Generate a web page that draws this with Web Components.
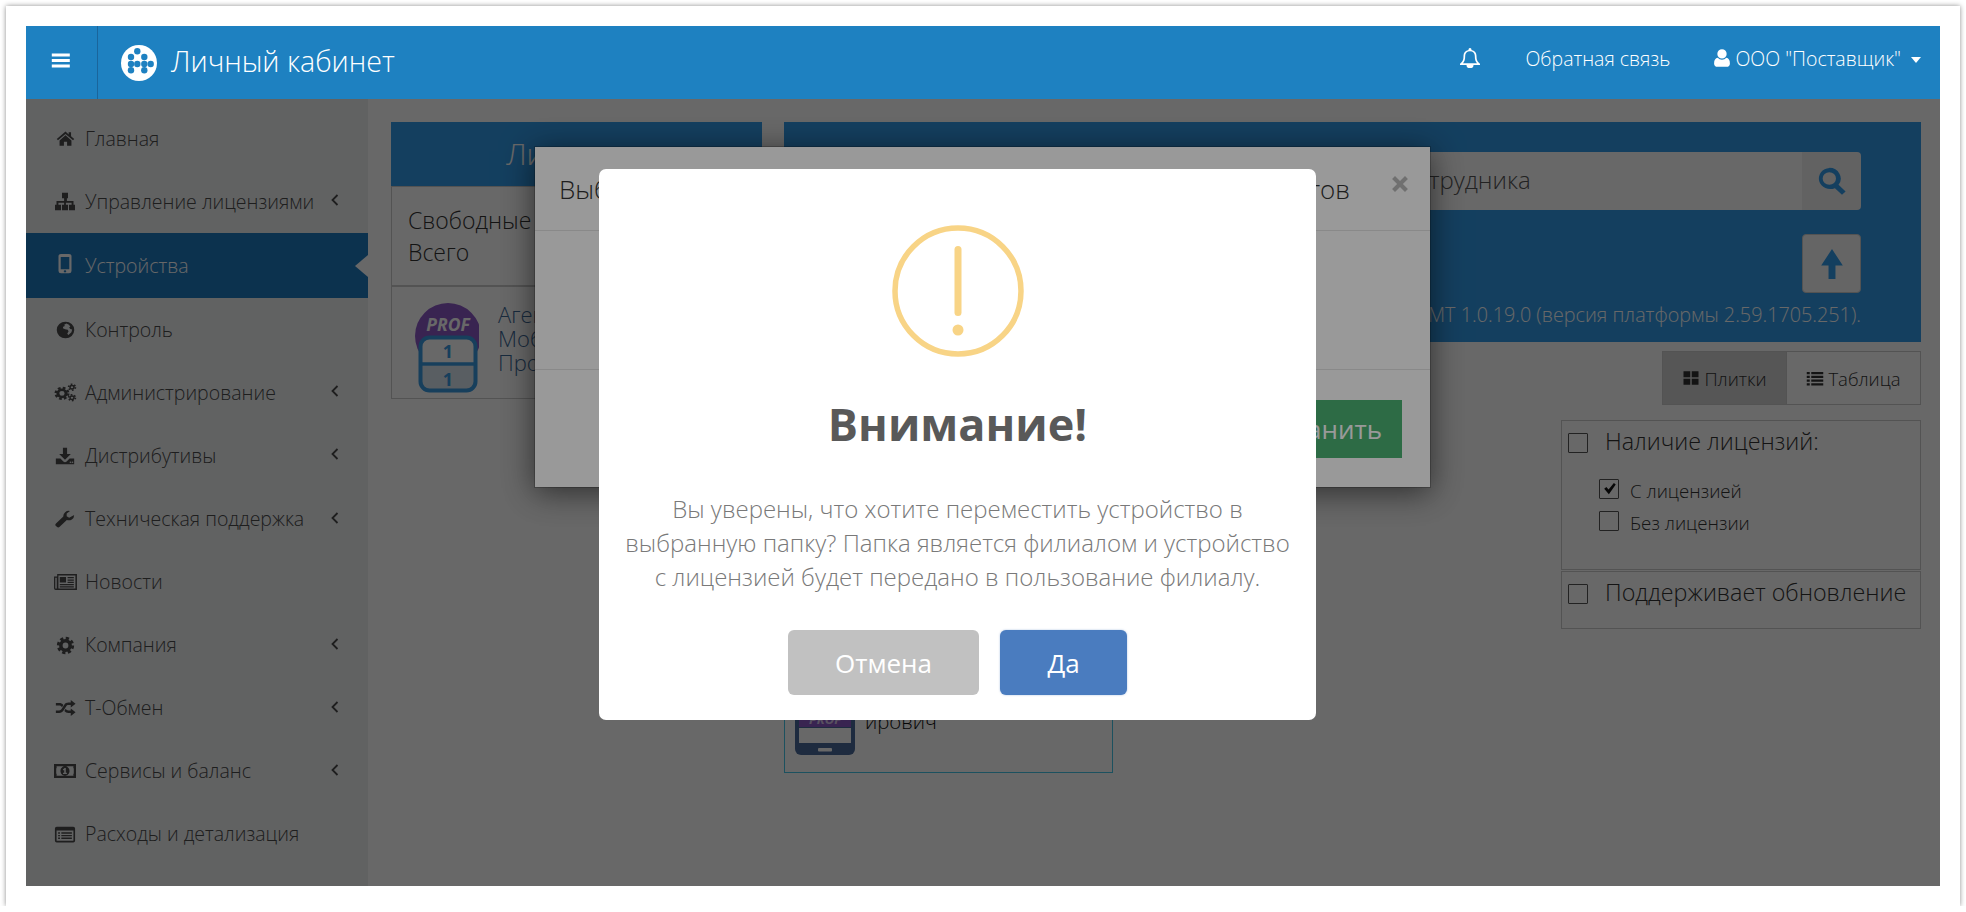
<!DOCTYPE html>
<html lang="ru">
<head>
<meta charset="utf-8">
<title>Личный кабинет</title>
<style>
    html, body { margin: 0; padding: 0; background: #fff; }
    body { font-family: "Open Sans", "Noto Sans", sans-serif; color: #333; }
</style>
</head>
<body>
<lk-frame>
    <lk-header></lk-header>
    <lk-main>
        <lk-sidebar slot="side">
            <lk-nav icon="home">Главная</lk-nav>
            <lk-nav icon="sitemap" arrow>Управление лицензиями</lk-nav>
            <lk-nav icon="mobile" active>Устройства</lk-nav>
            <lk-nav icon="globe">Контроль</lk-nav>
            <lk-nav icon="cogs" arrow>Администрирование</lk-nav>
            <lk-nav icon="download" arrow>Дистрибутивы</lk-nav>
            <lk-nav icon="wrench" arrow>Техническая поддержка</lk-nav>
            <lk-nav icon="news">Новости</lk-nav>
            <lk-nav icon="cog" arrow>Компания</lk-nav>
            <lk-nav icon="random" arrow>Т-Обмен</lk-nav>
            <lk-nav icon="money" arrow>Сервисы и баланс</lk-nav>
            <lk-nav icon="listalt">Расходы и детализация</lk-nav>
        </lk-sidebar>
        <lk-licenses slot="left"></lk-licenses>
        <lk-devices slot="right"></lk-devices>
        <lk-backdrop slot="over" opacity=".316"></lk-backdrop>
        <lk-dialog slot="over">Выберите папку для перемещения выбранных объектов</lk-dialog>
        <lk-backdrop slot="over" opacity=".4"></lk-backdrop>
        <lk-alert slot="over"></lk-alert>
    </lk-main>
</lk-frame>

<script>
const ICONS = {
    bars: '<path d="M2 4h20v3.4H2zM2 10.3h20v3.4H2zM2 16.6h20V20H2z"/>',
    home: '<path d="M12 3.2 1 12.6l1.5 1.7L12 6.2l9.500 8.100 1.500-1.700-4-3.400V4h-3v3.100zM12 8 4.500 14.400V21H10v-5h4v5h5.500v-6.600z"/>',
    sitemap: '<path d="M9 2h6v6h-1.100v3H20.500v4H22v6h-6v-6h2.600v-2.100h-5.700V15H15v6H9v-6h2.100v-2.100H5.400V15H8v6H2v-6h1.500v-4h7.600V8H9z"/>',
    mobile: '<path fill-rule="evenodd" d="M8 1h8a2.500 2.500 0 0 1 2.500 2.500v17A2.500 2.500 0 0 1 16 23H8a2.500 2.500 0 0 1-2.500-2.500v-17A2.500 2.500 0 0 1 8 1zM7.700 4.500v14.200h8.600V4.500zM12 19.600a1.300 1.300 0 1 0 0 2.600 1.300 1.300 0 0 0 0-2.600z"/>',
    globe: '<path fill-rule="evenodd" d="M12 2a10 10 0 1 1 0 20 10 10 0 0 1 0-20zM13 4.200l-2.500 1.500.8 1.600-2 .8-.3 1.900 2.500 1 3 .6 1 2-1.500 3 1.300 1.500 3.500-3.500.8-3.100-2-.6-1.500-2 1.400-.7-1.500-2.500z"/>',
    cogs: '<g fill="none" stroke="currentColor"><circle cx="9" cy="13" r="4.100" stroke-width="3"/><circle cx="9" cy="13" r="6.200" stroke-width="2.600" stroke-dasharray="2.700 2.170"/><circle cx="19" cy="6" r="2" stroke-width="1.500"/><circle cx="19" cy="6" r="3.400" stroke-width="1.700" stroke-dasharray="1.700 1.870"/><circle cx="19" cy="18" r="2" stroke-width="1.500"/><circle cx="19" cy="18" r="3.400" stroke-width="1.700" stroke-dasharray="1.700 1.870"/></g>',
    download: '<path d="M9.500 2h5v7.500h4.500L12 16.500 5 9.500h4.500zM1 15h5.500L10 18.500a3 3 0 0 0 4 0L17.500 15H23v7H1zM18.500 18.500a1 1 0 1 0 0 2 1 1 0 0 0 0-2zM21 18.500a1 1 0 1 0 0 2 1 1 0 0 0 0-2z"/>',
    wrench: '<path d="M23 6.500a6.500 6.500 0 0 1-8.800 6.100L5.600 21.300a2.400 2.400 0 0 1-3.400 0l-1-1a2.400 2.400 0 0 1 0-3.400l8.800-8.700A6.500 6.500 0 0 1 18 1.300l-4 3.200v3.500l3 1.800 5.500-3.300z"/>',
    news: '<path fill-rule="evenodd" d="M4 4h19v16H2.500A1.800 1.800 0 0 1 1 18.200V6.500h3zM2.200 7.700v10.300a.7.700 0 0 0 1.400 0V7.700zM5.200 5.500v13h16.300v-13zM6.500 7h6v5.500h-6zM14 7h6v1.300h-6zM14 9.500h6v1.200h-6zM14 11.700h6v1.200h-6zM6.500 14h13.500v1.200H6.500zM6.500 16.200h13.500v1.200H6.500z"/>',
    cog: '<g fill="none" stroke="currentColor"><circle cx="12" cy="12" r="5.900" stroke-width="4.500"/><circle cx="12" cy="12" r="9.100" stroke-width="3.600" stroke-dasharray="4.100 3.050"/></g>',
    random: '<path d="M18 2.500 23.500 7 18 11.500V8.500h-2.600c-1.200 0-2 .6-2.700 1.700L9.800 15c-1.200 2-2.800 3-5 3H1v-3h3.800c1.200 0 2-.6 2.700-1.700l2.900-4.900c1.200-2 2.800-2.900 5-2.900H18zM1 6h3.800c2 0 3.500.8 4.700 2.400L8 11C7.200 9.600 6.200 9 4.800 9H1zM18 12.500 23.500 17 18 21.500V18h-2.600c-2 0-3.500-.8-4.700-2.400l1.500-2.600c.8 1.400 1.800 2 3.200 2H18z"/>',
    money: '<path fill-rule="evenodd" d="M1 5h22v14H1zM3.500 7.200A2.700 2.700 0 0 1 3.200 9.800v4.400a2.700 2.700 0 0 1 .3 2.600h17a2.700 2.700 0 0 1 .3-2.600V9.800a2.700 2.700 0 0 1-.3-2.600zM12 7.300c2.500 0 4.500 2.100 4.500 4.700s-2 4.700-4.500 4.700-4.500-2.100-4.500-4.700 2-4.700 4.500-4.700zM12.800 9h-1.200l-1.800 1.600.7.900.7-.6v2.900h-1.200v1.200h3.900v-1.200h-1.100z"/>',
    listalt: '<path fill-rule="evenodd" d="M3 3h18a2 2 0 0 1 2 2v14a2 2 0 0 1-2 2H3a2 2 0 0 1-2-2V5a2 2 0 0 1 2-2zM2.800 7.500v11a.6.6 0 0 0 .6.600h17.200a.6.6 0 0 0 .6-.6v-11zM4.500 9.500h2v1.500h-2zM8 9.500h11.500v1.500H8zM4.500 12.500h2v1.500h-2zM8 12.500h11.500v1.500H8zM4.500 15.500h2v1.500h-2zM8 15.500h11.500v1.500H8z"/>',
    bell: '<path fill-rule="evenodd" d="M12 1.200a1.500 1.500 0 0 1 1.400 2.100c3.300.6 5.100 3 5.100 6.200 0 5 1 6.500 3.500 8.800v1.200h-6.500a3.500 3.500 0 0 1-7 0H2v-1.200c2.500-2.300 3.500-3.800 3.500-8.800 0-3.200 1.800-5.600 5.100-6.200A1.500 1.500 0 0 1 12 1.200zM12 4.500c-3 0-4.800 2-4.800 5 0 4-.6 6.200-2.200 8.300h14c-1.600-2.100-2.200-4.300-2.200-8.300 0-3-1.800-5-4.800-5z"/>',
    user: '<path d="M12 1.500a5.600 5.600 0 1 1 0 11.200 5.600 5.600 0 0 1 0-11.200zM6.800 11.800a7 7 0 0 0 10.400 0c2.600.3 4.300 2.700 4.300 6.700 0 2.800-1.700 4-3.900 4H6.400c-2.200 0-3.900-1.200-3.900-4 0-4 1.700-6.400 4.300-6.700z"/>',
    search: '<path fill-rule="evenodd" d="M10 1.500a8.500 8.500 0 0 1 6.900 13.500l5.300 5.300-2.700 2.700-5.300-5.300A8.500 8.500 0 1 1 10 1.500zM10 5a5 5 0 1 0 0 10 5 5 0 0 0 0-10z"/>',
    up: '<path d="M12 2 22 13l-2 0H15.200V22H8.800V13H4l-2 0z"/>',
    th: '<path d="M2 3h9v8H2zM13 3h9v8h-9zM2 13h9v8H2zM13 13h9v8h-9z"/>',
    list: '<path d="M1 4h4v3H1zM7 4h16v3H7zM1 9h4v3H1zM7 9h16v3H7zM1 14h4v3H1zM7 14h16v3H7zM1 19h4v3H1zM7 19h16v3H7z"/>',
    check: '<path d="M3.500 12.500 7 9.500l3.500 4L19 3l3 2.500L11 21z"/>',
    close: '<path d="M6 2.500 12 8.500 18 2.500 21.500 6 15.500 12 21.500 18 18 21.500 12 15.500 6 21.500 2.500 18 8.500 12 2.500 6z"/>'
}

// width and height of the svg box per menu icon, the paths don't fill the whole 24x24
const NAV_SIZES = {
    home: [19, 19],
    sitemap: [24, 22],
    mobile: [24, 21],
    globe: [21, 20],
    cogs: [24, 21],
    download: [20, 20],
    wrench: [20, 19],
    news: [25, 24],
    cog: [19, 19],
    random: [21, 20],
    money: [24, 24],
    listalt: [22, 21]
}

function iconStyle() {
    return `
    <style>
        :host { display: inline-block; line-height: 0; width: 1em; height: 1em; flex: none; }
        svg { width: 100%; height: 100%; fill: currentColor; display: block; }
    </style>
    `
}

class LkIcon extends HTMLElement {
    connectedCallback() {
        if (this.shadowRoot) return
        const shadow = this.attachShadow({ mode: 'open' })
        const name = this.getAttribute('name')
        shadow.innerHTML = iconStyle() + `<svg viewBox="0 0 24 24" preserveAspectRatio="none">${ICONS[name] || ''}</svg>`
    }
}
customElements.define('lk-icon', LkIcon)

class LkFrame extends HTMLElement {
    constructor() {
        super()
        const shadow = this.attachShadow({ mode: 'open' })
        shadow.innerHTML = `
        <style>
            :host {
                display: block;
                box-sizing: border-box;
                width: 1954px;
                height: 900px;
                margin: 6px 0 0 6px;
                padding: 20px;
                background: #fff;
                box-shadow: 0 0 5px rgba(0, 0, 0, .45);
            }
        </style>
        <slot></slot>
        `
    }
}
customElements.define('lk-frame', LkFrame)

class LkHeader extends HTMLElement {
    constructor() {
        super()
        const shadow = this.attachShadow({ mode: 'open' })
        shadow.innerHTML = `
        <style>
            :host {
                display: flex;
                align-items: stretch;
                height: 73px;
                background: #1e81c1;
                color: #fff;
                font-weight: 300;
            }
            .toggle {
                box-sizing: border-box;
                width: 72px;
                border-right: 1px solid #1a659c;
                display: flex;
                align-items: center;
                padding-left: 23.500px;
            }
            .toggle lk-icon { width: 21.600px; height: 21px; margin-top: -5px; }
            .brand { display: flex; align-items: center; padding-left: 23px; font-size: 28.600px; gap: 14px; flex: 1; }
            .brand svg { width: 36px; height: 36px; display: block; }
            .brand span { margin-top: -4px; }
            .links { display: flex; align-items: center; font-size: 19.500px; padding-bottom: 9px; padding-right: 19px; }
            .bell { width: 24px; height: 22px; margin-right: 43px; }
            .fb { margin-right: 42px; }
            .user { width: 20px; height: 20px; margin-right: 3px; }
            .caret { width: 0; height: 0; border-left: 5.500px solid transparent; border-right: 5.500px solid transparent; border-top: 6px solid #fff; margin-left: 10px; margin-top: 3px; }
        </style>
        <div class="toggle"><lk-icon name="bars"></lk-icon></div>
        <div class="brand">
            <svg viewBox="0 0 36 36">
                <circle cx="18" cy="18" r="18" fill="#fff"/>
                <g fill="#1e81c1">
                    <circle cx="16.300" cy="6.300" r="3.200"/>
                    <circle cx="10" cy="12" r="3.200"/>
                    <circle cx="23.300" cy="12" r="3.200"/>
                    <circle cx="10" cy="19" r="3.200"/>
                    <circle cx="16.300" cy="19" r="3.200"/>
                    <circle cx="23.300" cy="19" r="3.200"/>
                    <circle cx="29.700" cy="19" r="3.200"/>
                    <circle cx="10" cy="25.300" r="3.200"/>
                    <circle cx="23.300" cy="25.300" r="3.200"/>
                </g>
            </svg>
            <span>Личный кабинет</span>
        </div>
        <div class="links">
            <lk-icon class="bell" name="bell"></lk-icon>
            <span class="fb">Обратная связь</span>
            <lk-icon class="user" name="user"></lk-icon>
            <span>ООО "Поставщик"</span>
            <i class="caret"></i>
        </div>
        `
    }
}
customElements.define('lk-header', LkHeader)

class LkMain extends HTMLElement {
    constructor() {
        super()
        const shadow = this.attachShadow({ mode: 'open' })
        shadow.innerHTML = `
        <style>
            :host {
                display: grid;
                grid-template-columns: 342px 394px 1fr;
                position: relative;
                height: 787px;
                overflow: hidden;
                background: #fff;
            }
            .left { padding: 23px 0 0 23px; }
            .right { padding: 23px 19px 0 22px; }
        </style>
        <slot name="side"></slot>
        <div class="left"><slot name="left"></slot></div>
        <div class="right"><slot name="right"></slot></div>
        <slot name="over"></slot>
        `
    }
}
customElements.define('lk-main', LkMain)

class LkSidebar extends HTMLElement {
    constructor() {
        super()
        const shadow = this.attachShadow({ mode: 'open' })
        shadow.innerHTML = `
        <style>
            :host { display: block; background: #edeff1; padding-top: 8px; height: 787px; box-sizing: border-box; }
        </style>
        <slot></slot>
        `
    }
}
customElements.define('lk-sidebar', LkSidebar)

class LkNav extends HTMLElement {
    constructor() {
        super()
        const shadow = this.attachShadow({ mode: 'open' })
        const icon = this.getAttribute('icon')
        const arrow = this.hasAttribute('arrow')
        const size = NAV_SIZES[icon]
        shadow.innerHTML = `
        <style>
            :host {
                display: flex;
                align-items: center;
                position: relative;
                height: 63.100px;
                padding-left: 28px;
                font-size: 19.500px;
                font-weight: 300;
                color: #4a4a4a;
            }
            :host([active]) { background: #207cc1; color: #fff; height: 65px; }
            :host([active])::after {
                content: '';
                position: absolute;
                right: 0;
                top: 50%;
                margin-top: -11px;
                border: 11px solid transparent;
                border-left-width: 0;
                border-right: 13px solid #fff;
            }
            .ic { width: 22px; height: 18px; display: flex; justify-content: center; align-items: center; margin-right: 9px; }
            .ic lk-icon { width: ${size[0]}px; height: ${size[1]}px; }
            :host([icon="mobile"]) .ic lk-icon { margin-top: -4px; }
            .txt { flex: 1; margin-top: -1px; }
            svg { width: 8px; height: 12px; margin-right: 29px; margin-top: -3px; fill: none; stroke: currentColor; stroke-width: 1.800; }
        </style>
        <span class="ic"><lk-icon name="${icon}"></lk-icon></span>
        <span class="txt"><slot></slot></span>
        ${arrow ? '<svg viewBox="0 0 8 12"><path d="M6.500 1 1.500 6l5 5"/></svg>' : ''}
        `
    }
}
customElements.define('lk-nav', LkNav)

class LkLicenses extends HTMLElement {
    constructor() {
        super()
        const shadow = this.attachShadow({ mode: 'open' })
        shadow.innerHTML = `
        <style>
            :host { display: block; font-weight: 300; }
            .head { height: 64px; box-sizing: border-box; padding-bottom: 2px; background: #339cea; color: #fff; display: flex; align-items: center; justify-content: center; font-size: 30px; }
            .row { border: 1px solid #ccc; box-sizing: border-box; }
            .stat { height: 101px; padding: 17px 0 0 16px; font-size: 23px; line-height: 32px; color: #333; border-bottom-width: 2px; }
            .lic { height: 112px; border-top: 0; display: flex; padding: 15px 0 0 23px; }
            .txt { margin-left: 19px; font-size: 22px; line-height: 24px; color: #3d6a99; white-space: nowrap; }
        </style>
        <div class="head">Лицензии</div>
        <div class="row stat">Свободные<br>Всего</div>
        <div class="row lic">
            <svg width="64" height="92" viewBox="0 0 64 92" style="flex:none;display:block">
                <circle cx="33" cy="34" r="33" fill="#8d58c7"/>
                <text x="33" y="29" text-anchor="middle" fill="#fff" font-family="Open Sans" font-weight="700" font-style="italic" font-size="17.500">PROF</text>
                <rect x="5.500" y="35.500" width="55" height="53" rx="9" fill="#fff"/>
                <path d="M5.500 63.500h55v16a9 9 0 0 1-9 9h-37a9 9 0 0 1-9-9z" fill="#dbe6ef"/>
                <rect x="5.500" y="35.500" width="55" height="53" rx="9" fill="none" stroke="#3a9ae0" stroke-width="4"/>
                <path d="M5.500 62h55" stroke="#3a9ae0" stroke-width="3.500"/>
                <text x="33" y="56" text-anchor="middle" fill="#3a9ae0" font-family="Open Sans" font-weight="700" font-size="18">1</text>
                <text x="33" y="84" text-anchor="middle" fill="#3a9ae0" font-family="Open Sans" font-weight="700" font-size="18">1</text>
            </svg>
            <div class="txt">Агент<br>Мобильный<br>Про</div>
        </div>
        `
    }
}
customElements.define('lk-licenses', LkLicenses)

class LkCheck extends HTMLElement {
    constructor() {
        super()
        const shadow = this.attachShadow({ mode: 'open' })
        const checked = this.hasAttribute('checked')
        shadow.innerHTML = `
        <style>
            :host { display: flex; align-items: center; font-weight: 300; }
            .box { box-sizing: border-box; width: 20px; height: 20px; border: 1px solid #555; border-radius: 1px; position: relative; flex: none; background: #fff; }
            lk-icon { position: absolute; left: 2px; top: 1px; width: 15px; height: 15px; color: #111; }
        </style>
        <span class="box">${checked ? '<lk-icon name="check"></lk-icon>' : ''}</span>
        <slot></slot>
        `
    }
}
customElements.define('lk-check', LkCheck)

class LkDevices extends HTMLElement {
    constructor() {
        super()
        const shadow = this.attachShadow({ mode: 'open' })
        shadow.innerHTML = `
        <style>
            :host { display: block; font-weight: 300; }
            .panel { box-sizing: border-box; height: 220px; background: #339cea; padding: 30px 60px 0 24px; color: #fff; position: relative; }
            .search { display: flex; height: 58px; }
            .input { flex: 1; background: #fff; color: #555; font-size: 24px; line-height: 56px; padding-left: 521px; border-radius: 4px 0 0 4px; }
            .sbtn { width: 59px; background: #f0f0f0; color: #339cea; border-radius: 0 4px 4px 0; display: flex; align-items: center; justify-content: center; }
            .sbtn lk-icon { width: 32px; height: 30px; }
            .upl { display: flex; justify-content: flex-end; margin-top: 24px; }
            .ubtn { box-sizing: border-box; width: 59px; height: 59px; background: #f8f8f8; border: 1px solid #ccc; border-radius: 4px; color: #339cea; display: flex; align-items: center; justify-content: center; }
            .ubtn lk-icon { width: 26px; height: 36px; }
            .ver { text-align: right; font-size: 19.800px; margin-top: 8px; white-space: nowrap; }
            .bar { display: flex; justify-content: flex-end; margin-top: 9px; }
            .tg { box-sizing: border-box; height: 54px; display: flex; align-items: center; font-size: 18.500px; border: 1px solid #ccc; color: #333; background: #fff; gap: 4px; justify-content: center; }
            .tg lk-icon { width: 18px; height: 18px; }
            .tg.on { width: 124px; background: #d2d2d2; border-right: 0; }
            .tg.off { width: 135px; }
            .grid { display: flex; justify-content: space-between; margin-top: 15px; }
            .tile { box-sizing: border-box; width: 329px; height: 353px; border: 1px solid #45c8e8; display: flex; padding: 244px 0 0 10px; font-size: 20.400px; color: #111; }
            .phone { width: 60px; height: 90px; flex: none; }
            .tile span { margin-left: 10px; margin-top: 41.500px; }
            .filters { width: 360px; }
            .fbox { box-sizing: border-box; border: 1px solid #ccc; padding: 5.500px 6px; font-size: 23.300px; }
            .fbox + .fbox { margin-top: 1px; }
            .fbox.a { height: 150px; }
            .fbox.b { height: 58px; }
            .main-check span { margin-left: 17px; line-height: 28px; margin-bottom: 4px; }
            .sub { margin: 16.250px 0 0 31px; font-size: 18.700px; display: flex; flex-direction: column; gap: 4.500px; }
            .sub span { margin-left: 11px; margin-top: 3px; }
        </style>
        <div class="panel">
            <div class="search">
                <div class="input">Поиск сотрудника</div>
                <div class="sbtn"><lk-icon name="search"></lk-icon></div>
            </div>
            <div class="upl"><div class="ubtn"><lk-icon name="up"></lk-icon></div></div>
            <div class="ver">Версия МТ 1.0.19.0 (версия платформы 2.59.1705.251).</div>
        </div>
        <div class="bar">
            <div class="tg on"><lk-icon name="th"></lk-icon>Плитки</div>
            <div class="tg off"><lk-icon name="list"></lk-icon>Таблица</div>
        </div>
        <div class="grid">
            <div class="tile">
                <svg class="phone" viewBox="0 0 60 90">
                    <rect x="0" y="0" width="60" height="90" rx="6" fill="#4c6b9a"/>
                    <rect x="4" y="38" width="52" height="24" fill="#8d58c7"/>
                    <text x="30" y="59" text-anchor="middle" fill="#d8c8ec" font-family="Open Sans" font-weight="700" font-style="italic" font-size="13">PROF</text>
                    <rect x="4" y="63" width="52" height="15" fill="#fff"/>
                    <rect x="23" y="83" width="14" height="3.500" rx="1" fill="#fff"/>
                </svg>
                <span>ирович</span>
            </div>
            <div class="filters">
                <div class="fbox a">
                    <lk-check class="main-check"><span>Наличие лицензий:</span></lk-check>
                    <div class="sub">
                        <lk-check checked><span>С лицензией</span></lk-check>
                        <lk-check><span>Без лицензии</span></lk-check>
                    </div>
                </div>
                <div class="fbox b">
                    <lk-check class="main-check"><span>Поддерживает обновление</span></lk-check>
                </div>
            </div>
        </div>
        `
    }
}
customElements.define('lk-devices', LkDevices)

class LkBackdrop extends HTMLElement {
    constructor() {
        super()
        const shadow = this.attachShadow({ mode: 'open' })
        shadow.innerHTML = `
        <style>
            :host { position: absolute; left: 0; top: 0; right: 0; bottom: 0; background: rgba(0, 0, 0, ${this.getAttribute('opacity')}); }
        </style>
        `
    }
}
customElements.define('lk-backdrop', LkBackdrop)

class LkDialog extends HTMLElement {
    constructor() {
        super()
        const shadow = this.attachShadow({ mode: 'open' })
        shadow.innerHTML = `
        <style>
            :host {
                position: absolute;
                left: 508px;
                top: 47px;
                width: 897px;
                height: 342px;
                box-sizing: border-box;
                background: #fff;
                background-clip: padding-box;
                border: 1px solid rgba(0, 0, 0, .2);
                box-shadow: 0 5px 30px rgba(0, 0, 0, .55);
                font-weight: 300;
                display: flex;
                flex-direction: column;
            }
            .head { height: 84px; box-sizing: border-box; border-bottom: 1px solid #e5e5e5; display: flex; align-items: center; justify-content: space-between; padding: 0 20px 0 24px; font-size: 26px; color: #333; }
            .head span { display: block; width: 791px; text-align-last: justify; }
            .head lk-icon { width: 20px; height: 20px; color: #bbb; margin-top: -10px; }
            .body { height: 139px; box-sizing: border-box; border-bottom: 1px solid #e5e5e5; }
            .foot { display: flex; justify-content: flex-end; padding: 30px 28px 0 0; }
            .save { height: 58px; width: 200px; padding-right: 20px; background: #4bb274; color: #fff; font-size: 26px; font-weight: 400; display: flex; align-items: center; justify-content: flex-end; box-sizing: border-box; }
        </style>
        <div class="head"><span><slot></slot></span><lk-icon name="close"></lk-icon></div>
        <div class="body"></div>
        <div class="foot"><div class="save">Сохранить</div></div>
        `
    }
}
customElements.define('lk-dialog', LkDialog)

class LkAlert extends HTMLElement {
    constructor() {
        super()
        const shadow = this.attachShadow({ mode: 'open' })
        shadow.innerHTML = `
        <style>
            :host {
                position: absolute;
                left: 573px;
                top: 70px;
                width: 717px;
                height: 551px;
                box-sizing: border-box;
                background: #fff;
                border-radius: 7px;
                display: flex;
                flex-direction: column;
                align-items: center;
                padding-top: 56px;
            }
            svg { width: 132px; height: 132px; display: block; }
            h2 { margin: 37px 0 0; font-size: 45px; line-height: 60px; font-weight: 700; color: #595959; }
            p { margin: 38px 0 0; width: 680px; text-align: center; font-size: 24px; line-height: 34px; font-weight: 300; color: #797979; }
            .btns { display: flex; gap: 21px; margin-top: 36px; }
            .btn { height: 65px; border-radius: 6px; color: #fff; font-size: 26px; font-weight: 400; display: flex; align-items: center; justify-content: center; }
            .no { width: 191px; background: #c1c1c1; }
            .yes { width: 127px; background: #4a7cbf; box-shadow: 0 0 2px rgba(74, 124, 191, .5); }
        </style>
        <svg viewBox="0 0 132 132">
            <circle cx="66" cy="66" r="63" fill="none" stroke="#f8d486" stroke-width="5.500"/>
            <rect x="62.500" y="21" width="7" height="70" rx="3.500" fill="#f8d486"/>
            <circle cx="66" cy="105" r="5.500" fill="#f8d486"/>
        </svg>
        <h2>Внимание!</h2>
        <p>Вы уверены, что хотите переместить устройство в выбранную папку? Папка является филиалом и устройство с лицензией будет передано в пользование филиалу.</p>
        <div class="btns">
            <div class="btn no">Отмена</div>
            <div class="btn yes">Да</div>
        </div>
        `
    }
}
customElements.define('lk-alert', LkAlert)
</script>
</body>
</html>
